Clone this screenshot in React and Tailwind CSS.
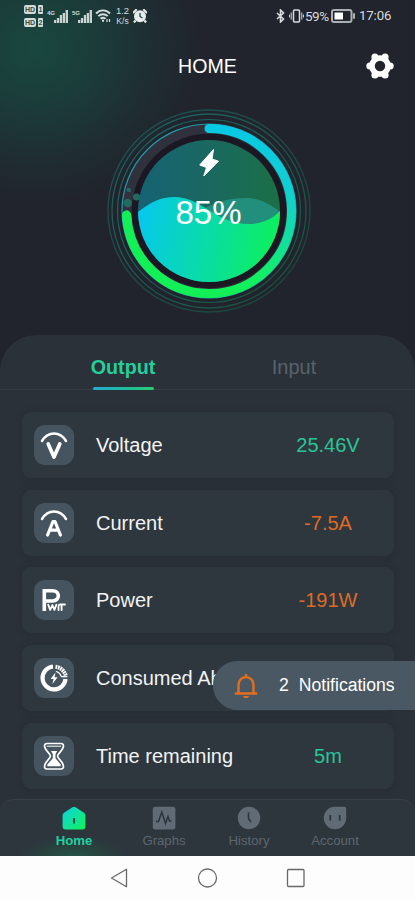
import React from "react";

const Tile = ({ children }) => (
  <div className="h-10 w-10 shrink-0 rounded-[11px] bg-[#46545f]">
    <svg viewBox="0 0 40 40" className="h-10 w-10" fill="none" stroke="#fff" strokeLinecap="round" strokeLinejoin="round">
      {children}
    </svg>
  </div>
);

const Arc = () => <path d="M8 16 C14 6 26 6 32 16" strokeWidth="2.5" />;

const rows = [
  {
    label: "Voltage",
    value: "25.46V",
    color: "text-[#28c596]",
    icon: (
      <>
        <Arc />
        <path d="M14.2 19 L20 32 L25.8 19" strokeWidth="3.7" />
      </>
    ),
  },
  {
    label: "Current",
    value: "-7.5A",
    color: "text-[#dd6b25]",
    icon: (
      <>
        <Arc />
        <path d="M13.6 32 L19 18.5 H21 L26.4 32 M15.5 27.2 H24.5" strokeWidth="3.2" />
      </>
    ),
  },
  {
    label: "Power",
    value: "-191W",
    color: "text-[#dd6b25]",
    icon: (
      <>
        <path d="M10.3 31 V10.7 H18.5 C26.3 10.7 26.3 21 18.5 21 H12" strokeWidth="3.6" strokeLinecap="butt" strokeLinejoin="miter" />
        <path d="M14.2 24.6 L16.2 30 L18.4 25 L20.4 30 L22.4 24.6 M24.5 30.2 V26.5 Q24.5 24.5 26.3 24.5 H31 M27.6 25 V30.2" strokeWidth="1.8" />
      </>
    ),
  },
  {
    label: "Consumed Ah",
    value: "",
    color: "",
    icon: (
      <>
        <path d="M19 8.5 A11.5 11.5 0 1 0 31.5 21" strokeWidth="4.2" strokeLinecap="butt" />
        <path d="M21.5 8.7 A12 12 0 0 1 31.8 18" strokeWidth="4" strokeDasharray="1.8 .7" strokeLinecap="butt" />
        <path d="M22.4 13.5 A7.5 7.5 0 0 1 27.3 18.6 H33" strokeWidth="1.2" />
        <path d="M21.5 14.5 L16.5 21 H19.5 L18.4 26 L23.6 19.3 H20.6 Z" fill="#fff" stroke="none" />
      </>
    ),
  },
  {
    label: "Time remaining",
    value: "5m",
    color: "text-[#28c596]",
    icon: (
      <>
        <path d="M13 7.5 H27 Q30 7.5 29.3 11 C28.5 15 23.5 17.5 23.5 20 C23.5 22.5 28.5 25 29.3 29.5 Q30 33 27 33 H13 Q10 33 10.7 29.5 C11.5 25 16.5 22.5 16.5 20 C16.5 17.5 11.5 15 10.7 11 Q10 7.5 13 7.5 Z" strokeWidth="1.7" />
        <path d="M13.2 10.2 H26.8" strokeWidth="1" />
        <path d="M17 15 H23.3 L21.5 18 V22.3 L26.7 28.5 V30.3 H13.3 V28.5 L18.8 22.3 V18 Z" fill="#fff" stroke="none" />
      </>
    ),
  },
];

const Signal = () => (
  <svg viewBox="0 0 14 13" className="h-[13px] w-[14px]" fill="#c8d3d1">
    <rect x="0" y="10" width="2.3" height="3" />
    <rect x="2.9" y="8" width="2.3" height="5" />
    <rect x="5.8" y="5" width="2.3" height="8" />
    <rect x="8.7" y="3" width="2.3" height="10" />
    <rect x="11.6" y="0" width="2.4" height="13" />
  </svg>
);

const HdBox = ({ n }) => (
  <div className="flex h-[9px] gap-[2px]">
    <span className="flex h-[9px] w-3 items-center justify-center rounded-[2px] bg-[#d2dcda] text-[7px] leading-none font-bold text-[#31514d]">HD</span>
    <span className="flex h-[9px] w-[5px] items-center justify-center rounded-[1px] bg-[#d2dcda] text-[7px] leading-none font-bold text-[#31514d]">{n}</span>
  </div>
);

function StatusBar() {
  return (
    <div className="flex h-8 items-center pl-6 pr-[23px] text-[#d6dcdd]">
      <div className="flex flex-col gap-[4px]">
        <HdBox n="1" />
        <HdBox n="2" />
      </div>
      <span className="ml-1 -mt-1.5 w-[7px] text-[6px] font-bold">4G</span>
      <Signal />
      <span className="ml-1 -mt-1.5 w-[6px] text-[6px] font-bold">5G</span>
      <Signal />
      <svg viewBox="0 0 16 14" className="ml-[3px] h-[14px] w-4" fill="none" stroke="#d6dcdd" strokeWidth="1.9">
        <path d="M1 4.5 C5 .3 11 .3 15 4.5 M3.3 7.2 C6 4.5 10 4.5 12.7 7.2" />
        <path d="M5.5 9.8 C7 8.5 9 8.5 10.5 9.8 M7 11.8 H9" />
        <path d="M12 10 V13 M14.5 10 V13" strokeWidth="1.2" />
      </svg>
      <div className="ml-[3px] flex w-[17px] flex-col items-center text-[9.5px] leading-[10px]">
        <span>1.2</span>
        <span className="text-[8.5px]">K/s</span>
      </div>
      <svg viewBox="0 0 14 14" className="ml-[2px] h-[14px] w-[14px]">
        <path d="M0 4 L3.7 .3 M14 4 L10.3 .3 M2.5 11.5 L1 13.5 M11.5 11.5 L13 13.5" stroke="#e6ecec" strokeWidth="2.2" />
        <circle cx="7" cy="7.3" r="6" fill="#e6ecec" />
        <path d="M7 4 V7.5 L9.5 9" stroke="#23433f" strokeWidth="1.3" fill="none" />
      </svg>
      <div className="ml-auto flex items-center">
        <svg viewBox="0 0 9 14" className="h-[14px] w-[9px]" fill="none" stroke="#d6dcdd" strokeWidth="1.6">
          <path d="M1 4 L7.5 10 L4.5 13 V1 L7.5 4 L1 10" />
        </svg>
        <svg viewBox="0 0 15 14" className="ml-1 h-[14px] w-[15px]" fill="none" stroke="#d6dcdd" strokeWidth="1.5">
          <rect x="4.5" y="1" width="6" height="12" rx="1" />
          <path d="M2.2 3.5 V10.5 M12.8 3.5 V10.5 M.4 5.5 V8.5 M14.6 5.5 V8.5" strokeWidth="1" />
        </svg>
        <span className="ml-[1px] w-[25px] font-[Roboto] text-[13.5px] tracking-[-0.5px]">59%</span>
        <svg viewBox="0 0 24 14" className="ml-[1px] h-[14px] w-6">
          <rect x="1" y="1" width="19.5" height="12" rx="2" fill="none" stroke="#a9afb3" strokeWidth="2" />
          <rect x="3.5" y="3.5" width="8.5" height="7" fill="#fff" />
          <rect x="22" y="4" width="2" height="6" rx="1" fill="#a9afb3" />
        </svg>
        <span className="ml-1 w-[33px] whitespace-nowrap font-[Roboto] text-[13.2px] tracking-[-0.1px]">17:06</span>
      </div>
    </div>
  );
}

function Gauge() {
  return (
    <div className="mx-auto mt-[21px] grid h-[208px] w-[208px] translate-x-px">
      <svg viewBox="0 0 208 208" className="col-start-1 row-start-1 h-[208px] w-[208px]" fill="none">
        <defs>
          <linearGradient id="arc" x1="0" y1="0" x2="0" y2="1">
            <stop offset="0" stopColor="#08c9e3" />
            <stop offset=".35" stopColor="#10cfd4" />
            <stop offset=".68" stopColor="#12df9c" />
            <stop offset=".9" stopColor="#12ef62" />
            <stop offset="1" stopColor="#12f055" />
          </linearGradient>
          <linearGradient id="arcLeft" x1="0" y1="0" x2="1" y2="0">
            <stop offset="0" stopColor="#12f055" />
            <stop offset=".5" stopColor="#12f055" />
            <stop offset="1" stopColor="#12f055" stopOpacity="0" />
          </linearGradient>
          <linearGradient id="water" gradientUnits="userSpaceOnUse" x1="33" y1="110" x2="172" y2="140">
            <stop offset="0" stopColor="#06c8ed" />
            <stop offset=".5" stopColor="#09dba8" />
            <stop offset="1" stopColor="#0df05b" />
          </linearGradient>
          <linearGradient id="sky" x1="0" y1="0" x2="1" y2="0">
            <stop offset="0" stopColor="#166274" />
            <stop offset=".5" stopColor="#1a6860" />
            <stop offset="1" stopColor="#1a7045" />
          </linearGradient>
          <linearGradient id="halo" x1="0" y1="0" x2="1" y2="1">
            <stop offset="0" stopColor="#1c7778" />
            <stop offset="1" stopColor="#17603c" />
          </linearGradient>
          <clipPath id="disc"><circle cx="104" cy="104" r="71" /></clipPath>
        </defs>
        <circle cx="104" cy="104" r="101" stroke="url(#halo)" strokeOpacity=".55" strokeWidth="1.3" />
        <circle cx="104" cy="104" r="97" stroke="url(#halo)" strokeOpacity=".75" strokeWidth="1.3" />
        <circle cx="104" cy="104" r="91.5" stroke="url(#halo)" strokeOpacity=".8" strokeWidth="1.2" />
        <circle cx="104" cy="104" r="81" stroke="#2f323c" strokeWidth="12" />
        <circle cx="104" cy="104" r="74" stroke="#1b1823" strokeWidth="6.5" />
        <circle cx="104" cy="104" r="87" stroke="#2697a8" strokeWidth="1.2" />
        <path d="M104 21.5 A82.5 82.5 0 1 1 21.6 108" stroke="url(#arc)" strokeWidth="9" strokeLinecap="round" />
        <path d="M104 186.5 A82.5 82.5 0 0 1 21.6 108" stroke="url(#arcLeft)" strokeWidth="9" strokeLinecap="round" />
        <g clipPath="url(#disc)">
          <rect x="33" y="33" width="142" height="142" fill="url(#sky)" />
          <path d="M95 104 C112 94 126 91 140 91 C154 91 165 97 175 105 V120 H110 Z" fill="#228f7c" />
          <path d="M33 105 C46 95 56 90 69 90 C98 90 110 117 144 117 C158 117 168 111 175 104 V180 H33 Z" fill="url(#water)" />
        </g>
        <circle cx="22.7" cy="96" r="4.3" fill="#236a5d" />
        <circle cx="31.5" cy="90" r="3.6" fill="#236a5d" />
        <circle cx="23.8" cy="83" r="2.2" fill="#236a5d" />
        <path d="M108.5 42.5 L94.7 58 L101.5 60.5 L98.8 69 L113.5 54.2 L107 52 Z" fill="#fff" stroke="#fff" strokeWidth="1" strokeLinejoin="round" />
      </svg>
      <span className="relative col-start-1 row-start-1 mt-[3px] self-center justify-self-center text-[33px] leading-9 text-white">85%</span>
    </div>
  );
}

const nav = [
  {
    label: "Home",
    icon: (
      <>
        <defs>
          <linearGradient id="home" x1="0" y1="0" x2="1" y2="1">
            <stop offset="0" stopColor="#09d2e0" />
            <stop offset=".5" stopColor="#11e2a0" />
            <stop offset="1" stopColor="#0df455" />
          </linearGradient>
        </defs>
        <path d="M2 6.8 L10.5 1.2 Q12 .3 13.5 1.2 L22 6.8 Q23.4 7.8 23.4 9.5 V20.5 Q23.4 23.5 20.4 23.5 H3.6 Q.6 23.5 .6 20.5 V9.5 Q.6 7.8 2 6.8Z" fill="url(#home)" />
        <path d="M12 12 V17.5" stroke="#1c4b52" strokeWidth="2" />
      </>
    ),
  },
  {
    label: "Graphs",
    icon: (
      <>
        <rect x=".8" y=".8" width="22.6" height="22.6" rx="2.5" fill="#606b75" />
        <path d="M4 15.5 H6.5 L9.8 6 L13.5 17.5 L16 10.5 L17.5 15 H19.5" fill="none" stroke="#2b353d" strokeWidth="1.5" />
      </>
    ),
  },
  {
    label: "History",
    icon: (
      <>
        <circle cx="12" cy="12" r="11.2" fill="#606b75" />
        <path d="M11.5 6.5 V12.5 L14 16" fill="none" stroke="#2b353d" strokeWidth="1.6" />
      </>
    ),
  },
  {
    label: "Account",
    icon: (
      <>
        <path d="M12 .8 H21.5 Q23.2 .8 23.2 2.5 V12 A11.2 11.2 0 1 1 12 .8Z" fill="#606b75" />
        <path d="M7.3 9 V14.5 M16.7 9 V14.5" stroke="#2b353d" strokeWidth="1.8" />
      </>
    ),
  },
];

export default function App() {
  return (
    <div className="flex h-[900px] w-[415px] flex-col overflow-hidden bg-[#21242d] bg-[radial-gradient(ellipse_165px_155px_at_35px_48px,#19473f_0%,#1b3d3a_35%,#1f2d32_72%,#21242d_100%)] font-['Liberation_Sans',Arial,sans-serif]">
      <StatusBar />
      <header className="grid h-[54px] grid-cols-[1fr_auto_1fr] items-center pt-[14px] text-white">
        <span />
        <h1 className="text-[19.6px] leading-6">HOME</h1>
        <svg viewBox="0 0 28 28" className="mr-[21px] h-7 w-7 justify-self-end" fill="none" stroke="#fff">
          <circle cx="14" cy="14" r="8" strokeWidth="5.6" />
          <g fill="#fff" stroke="none">
            <circle cx="24.2" cy="14" r="3.5" />
            <circle cx="3.8" cy="14" r="3.5" />
            <circle cx="19.1" cy="4.9" r="3.5" />
            <circle cx="8.9" cy="4.9" r="3.5" />
            <circle cx="19.1" cy="23.1" r="3.5" />
            <circle cx="8.9" cy="23.1" r="3.5" />
          </g>
        </svg>
      </header>
      <Gauge />
      <main className="relative mt-[20px] flex h-[464px] flex-col rounded-t-[36px] bg-[#2a3138]">
        <div className="grid h-[55px] shrink-0 grid-cols-[246px_96px_73px] border-b border-[#353b42] text-center text-[20px]">
          <div className="flex flex-col items-center justify-end">
            <span className="text-[19.7px] leading-6 font-bold text-[#25ce9b]">Output</span>
            <span className="mt-[8px] -mb-px h-[3px] w-[61px] rounded-full bg-linear-to-r from-[#25a9cf] to-[#2acb6a]" />
          </div>
          <span className="self-end pb-[10px] leading-6 text-[#59626a]">Input</span>
        </div>
        <div className="mt-[22px] flex flex-col gap-[11.7px] pl-[22px] pr-[21px]">
          {rows.map((r) => (
            <div key={r.label} className="flex h-[66px] shrink-0 items-center rounded-[9px] bg-[#2f373e] pl-3 shadow-[0_0_5px_1px_#272e35]">
              <Tile>{r.icon}</Tile>
              <span className="ml-[22px] flex-1 whitespace-nowrap text-[20px] leading-6 text-[#f1f3f5]">{r.label}</span>
              <span className={`mr-[16px] w-[100px] text-center text-[20px] leading-6 ${r.color}`}>{r.value}</span>
            </div>
          ))}
        </div>
        <div className="absolute right-0 top-[326px] flex h-[49px] w-[202px] items-center rounded-l-full bg-[#4a5863] pl-[21px] text-[17.6px] text-white">
          <svg viewBox="0 0 24 26" className="h-[26px] w-6" fill="none" stroke="#e46d20" strokeWidth="2.4">
            <path d="M4.5 20 V12 C4.5 1.5 19.5 1.5 19.5 12 V20" />
            <path d="M.8 20.5 H23.2 M12 1 V4" />
            <path d="M8.8 23 H15.2 L13.5 25 H10.5Z" fill="#e46d20" stroke="none" />
          </svg>
          <span className="ml-[21px]">2</span>
          <span className="ml-[10px]">Notifications</span>
        </div>
      </main>
      <div className="bg-[#2a3138]">
        <nav className="grid h-[57px] grid-cols-[119px_90px_80px_92px_34px] rounded-t-[14px] border-t border-[#394148] bg-[#2d363d] bg-[radial-gradient(ellipse_54px_20px_at_73px_57px,#23564b_0%,#28453f_45%,transparent_100%)]">
          {nav.map((n, i) => (
            <div key={n.label} className={`flex flex-col items-center pt-[6px] ${i === 0 ? "pl-[29px] text-[#21cfa0]" : "text-[#5c6670]"}`}>
              <svg viewBox="0 0 24 24" className="h-6 w-6">{n.icon}</svg>
              <span className={`mt-px text-[13.2px] leading-5 ${i === 0 ? "font-bold" : ""}`}>{n.label}</span>
            </div>
          ))}
        </nav>
      </div>
      <footer className="flex h-[44px] items-center bg-[#fdfdfd] pl-[110px]">
        <svg viewBox="0 0 196 20" className="h-5 w-[196px]" fill="none" stroke="#68686a" strokeWidth="1.3" strokeLinejoin="round">
          <path d="M1.5 10 L16.5 1.2 V18.8 Z" />
          <circle cx="97.5" cy="10" r="9" />
          <rect x="177.5" y="1.5" width="16.5" height="17" rx="1" />
        </svg>
      </footer>
    </div>
  );
}
